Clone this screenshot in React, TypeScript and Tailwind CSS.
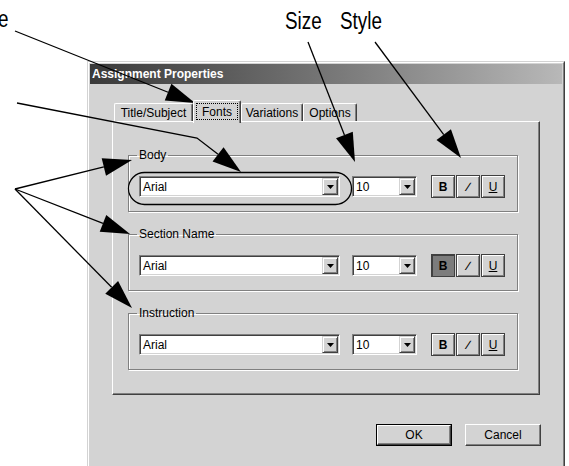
import type { ReactNode } from 'react';

const font = { fontFamily: '"Liberation Sans", Arial, sans-serif' };

function Arrow({ pts, len = 29, half = 9 }: { pts: number[][]; len?: number; half?: number }) {
  const [tx, ty] = pts[pts.length - 1];
  const [px, py] = pts[pts.length - 2];
  const d = Math.hypot(tx - px, ty - py);
  const ux = (tx - px) / d;
  const uy = (ty - py) / d;
  const bx = tx - ux * len;
  const by = ty - uy * len;
  const line = [...pts.slice(0, -1), [bx, by]].map((p) => p.join(',')).join(' ');
  const head = [
    [tx, ty],
    [bx - uy * half, by + ux * half],
    [bx + uy * half, by - ux * half],
  ]
    .map((p) => p.join(','))
    .join(' ');
  return (
    <>
      <polyline points={line} fill="none" stroke="#000" strokeWidth={1.3} />
      <polygon points={head} fill="#000" />
    </>
  );
}

function Combo({ value, width }: { value: string; width: string }) {
  return (
    <div
      className={`${width} h-[21px] flex items-center bg-white border border-t-[#808080] border-l-[#808080] border-r-white border-b-white shadow-[inset_1px_1px_0_#404040,inset_-1px_-1px_0_#d3d3d3]`}
    >
      <span className="flex-1 pl-[3px] text-[12px] leading-none text-black">{value}</span>
      <div className="mr-[1px] w-[16px] h-[17px] flex items-center justify-center bg-[#d3d3d3] border border-t-[#d3d3d3] border-l-[#d3d3d3] border-r-[#404040] border-b-[#404040] shadow-[inset_1px_1px_0_#fff,inset_-1px_-1px_0_#808080]">
        <svg width="7" height="4" viewBox="0 0 7 4">
          <path d="M0 0h7L3.5 4z" fill="#000" />
        </svg>
      </div>
    </div>
  );
}

function StyleBtn({ children, pressed }: { children: ReactNode; pressed?: boolean }) {
  return (
    <div
      className={
        pressed
          ? 'w-[24px] h-[23px] flex items-center justify-center bg-[#7c7c7c] border border-[#404040] shadow-[inset_1px_1px_0_#404040]'
          : 'w-[24px] h-[23px] flex items-center justify-center bg-[#d3d3d3] border border-[#404040] shadow-[inset_1px_1px_0_#fff,inset_-1px_-1px_0_#808080]'
      }
    >
      {children}
    </div>
  );
}

function Group({ label, bold, first }: { label: string; bold?: boolean; first?: boolean }) {
  return (
    <fieldset
      className={`${first ? '' : 'mt-[16px]'} w-[390px] border border-[#808080] shadow-[1px_1px_0_#fff,inset_1px_1px_0_#fff] px-[10px] pt-[13px] pb-[13px]`}
    >
      <legend className="-ml-[2px] px-[2px] text-[12px] leading-[13px] text-black">{label}</legend>
      <div className="flex items-center h-[23px]">
        <Combo value="Arial" width="w-[201px]" />
        <div className="ml-[12px]">
          <Combo value="10" width="w-[65px]" />
        </div>
        <div className="ml-[14px] flex gap-[1px]">
          <StyleBtn pressed={bold}>
            <span className="text-[12px] font-bold leading-none text-black">B</span>
          </StyleBtn>
          <StyleBtn>
            <span className="text-[12px] italic leading-none text-black -skew-x-[25deg]">I</span>
          </StyleBtn>
          <StyleBtn>
            <span className="text-[12px] underline leading-none text-black">U</span>
          </StyleBtn>
        </div>
      </div>
    </fieldset>
  );
}

function Tab({ label, width }: { label: string; width: string }) {
  return (
    <div
      className={`${width} h-[18px] flex items-center justify-center rounded-t-[2px] border-t border-l border-r border-t-white border-l-white border-r-[#404040] shadow-[inset_-1px_0_0_#808080] text-[12px] leading-none text-black`}
    >
      {label}
    </div>
  );
}

export default function App() {
  return (
    <div className="relative w-[569px] h-[466px] overflow-hidden bg-white" style={font}>
      <div className="pt-[61px] pl-[87px]">
        {/* dialog window */}
        <div className="w-[478px] h-[410px] bg-[#d3d3d3] border border-t-[#d3d3d3] border-l-[#d3d3d3] border-r-[#404040] border-b-[#404040]">
          <div className="h-full border border-t-white border-l-white border-r-[#808080] border-b-[#808080] p-[1px]">
            <div className="h-[20px] flex items-center pl-[2px] bg-gradient-to-r from-[#3a3a3a] to-[#b8b8b8] text-[12px] font-bold text-white leading-none">
              Assignment Properties
            </div>

            <div className="ml-[24px] mt-[16px] h-[21px] flex items-end">
              <Tab label="Title/Subject" width="w-[79px]" />
              <div className="relative z-10 -mb-[2px] w-[48px] h-[23px] p-[2px] pb-[3px] rounded-t-[2px] bg-[#d3d3d3] border-t border-l border-r border-t-white border-l-white border-r-[#404040] shadow-[inset_-1px_0_0_#808080]">
                <div className="h-full flex items-center justify-center border border-dotted border-black text-[12px] leading-none text-black">
                  Fonts
                </div>
              </div>
              <Tab label="Variations" width="w-[62px]" />
              <Tab label="Options" width="w-[54px]" />
            </div>

            <div className="ml-[22px] w-[428px] h-[274px] border border-t-white border-l-white border-r-[#404040] border-b-[#404040] shadow-[inset_-1px_-1px_0_#808080] pl-[15px] pt-[27px]">
              <Group label="Body" first />
              <Group label="Section Name" bold />
              <Group label="Instruction" />
            </div>

            <div className="mt-[29px] pr-[21px] flex justify-end gap-[13px]">
              <div className="w-[76px] h-[22px] border border-black">
                <div className="h-full flex items-center justify-center border border-t-white border-l-white border-r-[#404040] border-b-[#404040] shadow-[inset_-1px_-1px_0_#808080] text-[12px] leading-none text-black">
                  OK
                </div>
              </div>
              <div className="w-[76px] h-[22px] flex items-center justify-center border border-t-white border-l-white border-r-[#404040] border-b-[#404040] shadow-[inset_-1px_-1px_0_#808080] text-[12px] leading-none text-black">
                Cancel
              </div>
            </div>
          </div>
        </div>
      </div>

      {/* callout labels */}
      <span className="absolute left-[-2px] top-[8px] origin-left scale-x-[0.82] text-[23px] leading-none text-black">e</span>
      <span className="absolute left-[285px] top-[10px] origin-left scale-x-[0.82] text-[23px] leading-none text-black">Size</span>
      <span className="absolute left-[340px] top-[10px] origin-left scale-x-[0.82] text-[23px] leading-none text-black">Style</span>

      {/* callout arrows */}
      <svg className="absolute inset-0 pointer-events-none" width="569" height="466">
        <Arrow pts={[[15, 31], [195, 103]]} />
        <Arrow pts={[[17, 103], [197, 138], [241, 172]]} />
        <Arrow pts={[[308, 42], [355, 162]]} />
        <Arrow pts={[[375, 42], [461, 158]]} />
        <Arrow pts={[[15, 189], [132, 160]]} />
        <Arrow pts={[[15, 189], [130, 234]]} />
        <Arrow pts={[[15, 189], [132, 308]]} />
        <rect x="128.5" y="172.5" width="223" height="32" rx="16" fill="none" stroke="#000" strokeWidth={1.3} />
      </svg>
    </div>
  );
}
